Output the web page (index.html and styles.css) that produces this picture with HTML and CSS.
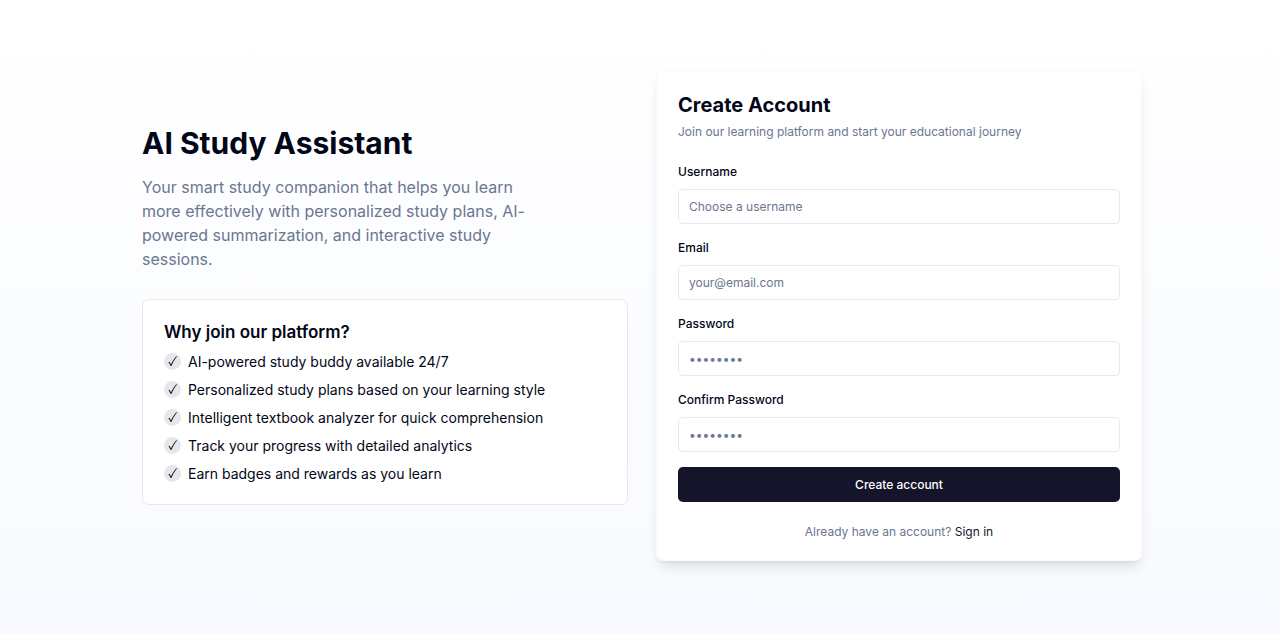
FILE: index.html
```html
<!DOCTYPE html>
<html lang="en">
<head>
  <meta charset="UTF-8">
  <meta name="viewport" content="width=device-width, initial-scale=1.0">
  <title>AI Study Assistant</title>
  <link rel="stylesheet" href="styles.css">
</head>
<body>
  <!-- Check mark used by the feature list -->
  <svg class="sprite" aria-hidden="true">
    <symbol id="check" viewBox="0 0 17 17">
      <path d="M4.4 9.3 5.4 8.8 7 11.3C8.3 8.4 10 5.8 12.3 3.2L13.1 3.2C10.6 6.4 8.8 9.5 7.4 13L6.7 13C6.1 11.6 5.4 10.4 4.4 9.3Z"/>
    </symbol>
  </svg>

  <main class="page">
    <!-- Presentation -->
    <section class="intro">
      <h1>AI Study Assistant</h1>
      <p class="lead">Your smart study companion that helps you learn more effectively with personalized study plans, AI-powered summarization, and interactive study sessions.</p>

      <div class="features">
        <h2>Why join our platform?</h2>
        <ul>
          <li><svg class="tick" aria-hidden="true"><use href="#check"/></svg>AI-powered study buddy available 24/7</li>
          <li><svg class="tick" aria-hidden="true"><use href="#check"/></svg>Personalized study plans based on your learning style</li>
          <li><svg class="tick" aria-hidden="true"><use href="#check"/></svg>Intelligent textbook analyzer for quick comprehension</li>
          <li><svg class="tick" aria-hidden="true"><use href="#check"/></svg>Track your progress with detailed analytics</li>
          <li><svg class="tick" aria-hidden="true"><use href="#check"/></svg>Earn badges and rewards as you learn</li>
        </ul>
      </div>
    </section>

    <!-- Registration form -->
    <section class="form-container">
      <h2>Create Account</h2>
      <p class="description">Join our learning platform and start your educational journey</p>

      <form id="registrationForm">
        <div class="field">
          <label for="username">Username</label>
          <input type="text" id="username" placeholder="Choose a username" required>
        </div>
        <div class="field">
          <label for="email">Email</label>
          <input type="email" id="email" placeholder="your@email.com" required>
        </div>
        <div class="field">
          <label for="password">Password</label>
          <input type="password" id="password" placeholder="••••••••" required>
        </div>
        <div class="field">
          <label for="confirmPassword">Confirm Password</label>
          <input type="password" id="confirmPassword" placeholder="••••••••" required>
        </div>
        <button type="submit">Create account</button>
      </form>

      <p class="signin">Already have an account? <a href="#">Sign in</a></p>
    </section>
  </main>
</body>
</html>
```
FILE: styles.css
```css
:root {
  --text: #020617;
  --primary: #14142b;
  --muted: #6b7690;
  --border: #e6e8ee;
}
* {
  box-sizing: border-box;
}
body {
  font-family: Inter, sans-serif;
  margin: 0;
  min-height: 100vh;
  display: flex;
  align-items: center;
  justify-content: center;
  background: linear-gradient(to bottom, #ffffff, #f8faff);
  color: var(--text);
}
h1,
h2,
p,
ul {
  margin: 0;
  padding: 0;
}
.sprite {
  position: absolute;
  width: 0;
  height: 0;
}
.page {
  width: 100%;
  max-width: 1056px;
  padding: 28px 26px 30px 30px;
  display: grid;
  grid-template-columns: 1fr 1fr;
  gap: 28px;
  align-items: center;
}
/* Left column */
h1 {
  font-size: 30px;
  line-height: 35px;
  font-weight: 700;
}
.lead {
  max-width: 390px;
  margin: 14px 0 28px;
  font-size: 16px;
  line-height: 24px;
  color: var(--muted);
}
.features {
  padding: 20px 21px;
  background: #fff;
  border: 1px solid var(--border);
  border-radius: 7px;
}
.features h2 {
  font-size: 17px;
  line-height: 24px;
  font-weight: 600;
  margin-bottom: 7px;
}
.features ul {
  list-style: none;
  display: grid;
  gap: 7px;
}
.features li {
  display: flex;
  align-items: center;
  gap: 7px;
  font-size: 14px;
  line-height: 21px;
}
.tick {
  flex: none;
  width: 17px;
  height: 17px;
  border-radius: 50%;
  background: #e7e7ea;
  fill: var(--primary);
}
/* Registration card */
.form-container {
  padding: 20px 21px;
  background: #fff;
  border: 1px solid #f8f9fb;
  border-radius: 7px;
  box-shadow: 0 9px 13px -3px rgba(0,0,0,0.1), 0 3px 5px -3px rgba(0,0,0,0.1);
}
.form-container h2 {
  font-size: 20px;
  line-height: 28px;
  font-weight: 700;
}
.description,
.signin {
  font-size: 12px;
  line-height: 17px;
  color: var(--muted);
}
.description {
  margin: 4px 0 24px;
}
.field {
  margin-bottom: 16px;
}
.field:last-of-type {
  margin-bottom: 15px;
}
label {
  display: block;
  margin-bottom: 9px;
  font-size: 12px;
  line-height: 16px;
  font-weight: 500;
}
input {
  display: block;
  width: 100%;
  height: 35px;
  padding: 0 10px;
  border: 1px solid var(--border);
  border-radius: 5px;
  background: #fff;
  color: var(--text);
  font-family: inherit;
  font-size: 12px;
}
input::placeholder {
  color: var(--muted);
  opacity: 1;
}
input:focus {
  border-color: var(--primary);
  outline: none;
}
button {
  width: 100%;
  height: 35px;
  border: none;
  border-radius: 5px;
  background: var(--primary);
  color: #fff;
  font-family: inherit;
  font-size: 12px;
  font-weight: 500;
  cursor: pointer;
}
.signin {
  margin-top: 21px;
  text-align: center;
}
.signin a {
  color: var(--primary);
  text-decoration: none;
}
.signin a:hover {
  text-decoration: underline;
}
@media (max-width: 768px) {
  .page {
    grid-template-columns: 1fr;
  }
}
```
